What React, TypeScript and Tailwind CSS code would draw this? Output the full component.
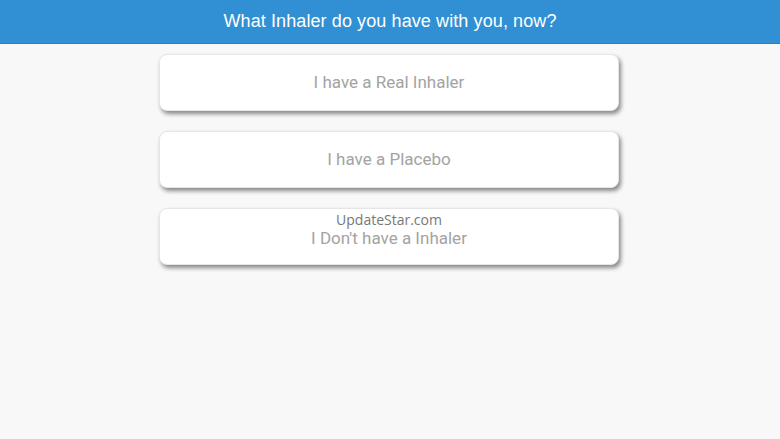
const options = ["I have a Real Inhaler", "I have a Placebo", "I Don't have a Inhaler"];

export default function App() {
  return (
    <div className="w-[780px] h-[439px] bg-[#f8f8f8] flex flex-col items-center font-['Liberation_Sans',sans-serif]">
      <div className="w-full h-[44px] bg-[#3190d3] border-b border-[#2a80bf] flex items-center justify-center text-white text-[18px] tracking-[0.1px]">
        What Inhaler do you have with you, now?
      </div>
      <div className="flex flex-col gap-[20px] mt-[10px] mr-[2px]">
        {options.map((label, i) =>
          i === 2 ? (
            <button
              key={i}
              className="w-[460px] h-[57px] bg-white rounded-[8px] border border-[#e6e6e6] shadow-[2px_3px_4px_rgba(0,0,0,0.45)] flex flex-col items-center pt-[2px] text-[#a3a3a3] text-[17px] font-['Roboto',sans-serif]"
            >
              <span className="text-[14px] leading-[17px] text-[#777] font-['Open_Sans',sans-serif]">
                UpdateStar.com
              </span>
              <span className="leading-[20px]">{label}</span>
            </button>
          ) : (
            <button
              key={i}
              className="w-[460px] h-[57px] bg-white rounded-[8px] border border-[#e6e6e6] shadow-[2px_3px_4px_rgba(0,0,0,0.45)] flex items-center justify-center text-[#a3a3a3] text-[17px] font-['Roboto',sans-serif]"
            >
              {label}
            </button>
          )
        )}
      </div>
    </div>
  );
}
